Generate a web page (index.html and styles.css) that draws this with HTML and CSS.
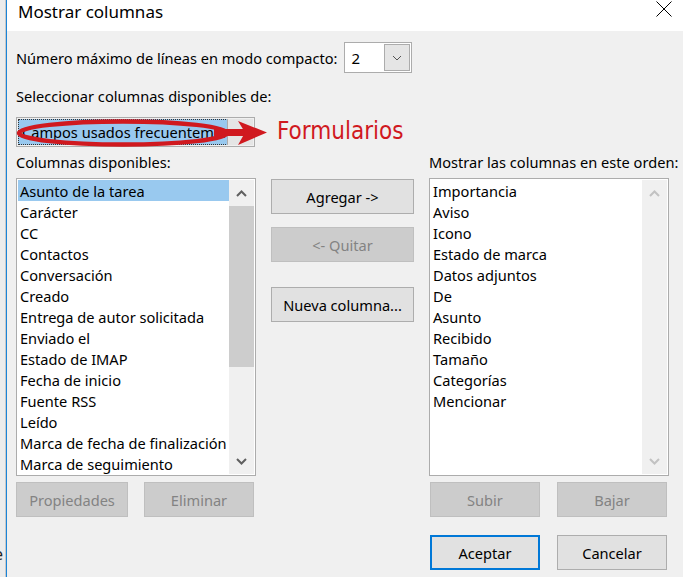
FILE: index.html
```html
<!DOCTYPE html>
<html lang="es">
<head>
    <meta charset="UTF-8">
    <meta name="viewport" content="width=device-width, initial-scale=1.0">
    <title>Mostrar columnas</title>
    <link rel="stylesheet" href="styles.css">
</head>
<body>
    <div class="screen">
        <div class="behind"><span class="behind-text">e</span></div>

        <div class="dialog">
            <div class="titlebar">
                <span class="title">Mostrar columnas</span>
                <svg class="close" width="16" height="16" viewBox="0 0 16 16">
                    <path d="M0.5 0.5 L15.5 15.5 M15.5 0.5 L0.5 15.5" stroke="#000" stroke-width="1" fill="none"/>
                </svg>
            </div>

            <div class="content">
                <div class="compact-row">
                    <span>Número máximo de líneas en modo compacto:</span>
                    <div class="combo">
                        <span class="combo-value">2</span>
                        <span class="combo-btn">
                            <svg width="10" height="6" viewBox="0 0 10 6"><path d="M1 1 L5 5 L9 1" stroke="#555" fill="none"/></svg>
                        </span>
                    </div>
                </div>

                <div class="select-label">Seleccionar columnas disponibles de:</div>

                <div class="source-row">
                    <div class="source-select">
                        <span class="source-value"><span class="focus-rect">Campos usados frecuentemente</span></span>
                        <span class="source-btn"></span>
                    </div>
                    <!-- anotación roja -->
                    <svg class="annot" width="270" height="32" viewBox="0 0 270 32">
                        <ellipse cx="107" cy="15" rx="104" ry="11.5" stroke="#d0191f" stroke-width="4.5" fill="none"/>
                        <rect x="198" y="11" width="32" height="7" fill="#d0191f"/>
                        <polygon points="222,3 251,14.5 222,27 229,14.5" fill="#d0191f"/>
                    </svg>
                    <span class="annot-text">Formularios</span>
                </div>

                <div class="columns">
                    <div class="col-label">Columnas disponibles:</div>
                    <div></div>
                    <div class="col-label">Mostrar las columnas en este orden:</div>

                    <div class="listbox">
                        <ul class="items">
                            <li class="selected">Asunto de la tarea</li>
                            <li>Carácter</li>
                            <li>CC</li>
                            <li>Contactos</li>
                            <li>Conversación</li>
                            <li>Creado</li>
                            <li>Entrega de autor solicitada</li>
                            <li>Enviado el</li>
                            <li>Estado de IMAP</li>
                            <li>Fecha de inicio</li>
                            <li>Fuente RSS</li>
                            <li>Leído</li>
                            <li>Marca de fecha de finalización</li>
                            <li>Marca de seguimiento</li>
                        </ul>
                        <div class="scrollbar">
                            <span class="arrow">
                                <svg width="11" height="7" viewBox="0 0 11 7"><path d="M1 6 L5.5 1.5 L10 6" stroke="#606060" stroke-width="2" fill="none"/></svg>
                            </span>
                            <span class="thumb"></span>
                            <span class="track"></span>
                            <span class="arrow">
                                <svg width="11" height="7" viewBox="0 0 11 7"><path d="M1 1 L5.5 5.5 L10 1" stroke="#606060" stroke-width="2" fill="none"/></svg>
                            </span>
                        </div>
                    </div>

                    <div class="mid-buttons">
                        <button class="btn">Agregar -&gt;</button>
                        <button class="btn" disabled>&lt;- Quitar</button>
                        <button class="btn btn-new">Nueva columna...</button>
                    </div>

                    <div class="listbox">
                        <ul class="items">
                            <li>Importancia</li>
                            <li>Aviso</li>
                            <li>Icono</li>
                            <li>Estado de marca</li>
                            <li>Datos adjuntos</li>
                            <li>De</li>
                            <li>Asunto</li>
                            <li>Recibido</li>
                            <li>Tamaño</li>
                            <li>Categorías</li>
                            <li>Mencionar</li>
                        </ul>
                        <div class="scrollbar">
                            <span class="arrow">
                                <svg width="11" height="7" viewBox="0 0 11 7"><path d="M1 6 L5.5 1.5 L10 6" stroke="#c2c2c2" stroke-width="2" fill="none"/></svg>
                            </span>
                            <span class="track"></span>
                            <span class="arrow">
                                <svg width="11" height="7" viewBox="0 0 11 7"><path d="M1 1 L5.5 5.5 L10 1" stroke="#c2c2c2" stroke-width="2" fill="none"/></svg>
                            </span>
                        </div>
                    </div>

                    <div class="btn-row left">
                        <button class="btn wide" disabled>Propiedades</button>
                        <button class="btn" disabled>Eliminar</button>
                    </div>
                    <div></div>
                    <div class="btn-row right">
                        <button class="btn" disabled>Subir</button>
                        <button class="btn" disabled>Bajar</button>
                    </div>
                </div>

                <div class="footer">
                    <button class="btn btn-default">Aceptar</button>
                    <button class="btn">Cancelar</button>
                </div>
            </div>
        </div>
    </div>
</body>
</html>
```

FILE: styles.css
```css
/* base */
html, body {
    margin: 0;
    height: 100%;
    font-family: "Noto Sans", "Open Sans", sans-serif;
    font-size: 14.6px;
    color: #000;
}

.screen {
    display: flex;
    width: 683px;
    height: 577px;
    overflow: hidden;
}

/* ventana de atrás */
.behind {
    width: 5px;
    background-color: #ececec;
    border-right: 1px solid #c8c8c8;
    display: flex;
    align-items: flex-end;
    overflow: hidden;
}
.behind-text {
    margin-left: -6px;
    margin-bottom: 12px;
    font-size: 16px;
    color: #222;
}

/* diálogo */
.dialog {
    flex: 1;
    display: flex;
    flex-direction: column;
    background-color: #f0f0f0;
    border-left: 1px solid #1a84d8;
}

.titlebar {
    height: 31px;
    background-color: #fff;
    display: flex;
    justify-content: space-between;
    align-items: flex-start;
    padding-left: 11px;
    padding-right: 11px;
    box-sizing: border-box;
}
.title {
    font-size: 17px;
    line-height: normal;
}
.close {
    margin-top: 1px;
}

.content {
    padding: 11px 0 0 9px;
}

/* fila modo compacto */
.compact-row {
    display: flex;
    align-items: center;
    height: 31px;
}
.combo {
    display: flex;
    align-items: center;
    margin-left: 7px;
    width: 68px;
    height: 31px;
    box-sizing: border-box;
    border: 1px solid #acacac;
    background-color: #fff;
    padding: 1px;
}
.combo-value {
    flex: 1;
    padding-left: 5px;
    font-size: 15px;
}
.combo-btn {
    width: 26px;
    height: 27px;
    box-sizing: border-box;
    background-color: #e5e5e5;
    border: 1px solid #acacac;
    display: flex;
    align-items: center;
    justify-content: center;
}

.select-label {
    margin-top: 13px;
    line-height: 21px;
}

/* origen de columnas */
.source-row {
    position: relative;
    margin-top: 10px;
    height: 30px;
}
.source-select {
    display: flex;
    width: 239px;
    height: 30px;
    box-sizing: border-box;
    border: 1px solid #acacac;
    padding: 1px;
}
.source-value {
    flex: 1;
    min-width: 0;
    background-color: #99c9ef;
    overflow: hidden;
    white-space: nowrap;
    display: flex;
}
.focus-rect {
    flex: 1;
    border: 1px dotted #333;
    padding-left: 3px;
    line-height: 24px;
}
.source-btn {
    width: 25px;
    background-color: #e5e5e5;
    border-left: 1px solid #acacac;
}

.annot {
    position: absolute;
    left: 0;
    top: 1px;
    overflow: visible;
}
.annot-text {
    position: absolute;
    left: 261px;
    top: -1px;
    font-family: "DejaVu Sans Condensed", "DejaVu Sans", sans-serif;
    font-stretch: condensed;
    font-size: 24px;
    line-height: 30px;
    color: #d0191f;
}

/* columnas */
.columns {
    display: grid;
    grid-template-columns: 240px 143px 240px;
    column-gap: 15px;
    margin-top: 5px;
}
.col-label {
    line-height: 21px;
    margin-bottom: 5px;
    white-space: nowrap;
}

.listbox {
    display: flex;
    height: 298px;
    box-sizing: border-box;
    border: 1px solid #acacac;
    background-color: #fff;
    padding: 1px;
}
.items {
    flex: 1;
    list-style: none;
    margin: 0;
    padding: 0;
    overflow: hidden;
}
.items li {
    height: 21px;
    line-height: 22px;
    padding-left: 2px;
    white-space: nowrap;
}
.items li.selected {
    background-color: #99c9ef;
}

.scrollbar {
    width: 25px;
    display: flex;
    flex-direction: column;
    background-color: #f0f0f0;
}
.arrow {
    height: 26px;
    display: flex;
    align-items: center;
    justify-content: center;
}
.thumb {
    height: 161px;
    background-color: #cdcdcd;
}
.track {
    flex: 1;
}

/* botones */
.btn {
    font-family: inherit;
    font-size: 14.6px;
    color: #000;
    background-color: #e1e1e1;
    border: 1px solid #adadad;
    border-radius: 0;
    height: 35px;
    width: 110px;
    padding: 0;
}
.btn:disabled {
    background-color: #cccccc;
    border-color: #bfbfbf;
    color: #838383;
}

.mid-buttons {
    display: flex;
    flex-direction: column;
    padding-top: 1px;
}
.mid-buttons .btn {
    width: 143px;
    margin-bottom: 13px;
}
.mid-buttons .btn-new {
    margin-top: 12px;
}

.btn-row {
    display: flex;
    justify-content: space-between;
    margin-top: 6px;
}
.btn-row.left {
    padding-right: 2px;
}
.btn-row .wide {
    width: 112px;
}
.btn-row.right {
    padding-left: 1px;
    padding-right: 2px;
}

.footer {
    display: flex;
    justify-content: flex-end;
    gap: 17px;
    width: 651px;
    margin-top: 18px;
}
.btn-default {
    border: 2px solid #0078d7;
}
```
